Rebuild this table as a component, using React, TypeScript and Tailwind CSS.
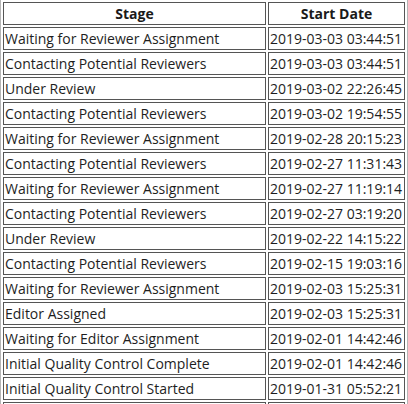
import React from "react";

const rows: [string, string][] = [
  ["Waiting for Reviewer Assignment", "2019-03-03 03:44:51"],
  ["Contacting Potential Reviewers", "2019-03-03 03:44:51"],
  ["Under Review", "2019-03-02 22:26:45"],
  ["Contacting Potential Reviewers", "2019-03-02 19:54:55"],
  ["Waiting for Reviewer Assignment", "2019-02-28 20:15:23"],
  ["Contacting Potential Reviewers", "2019-02-27 11:31:43"],
  ["Waiting for Reviewer Assignment", "2019-02-27 11:19:14"],
  ["Contacting Potential Reviewers", "2019-02-27 03:19:20"],
  ["Under Review", "2019-02-22 14:15:22"],
  ["Contacting Potential Reviewers", "2019-02-15 19:03:16"],
  ["Waiting for Reviewer Assignment", "2019-02-03 15:25:31"],
  ["Editor Assigned", "2019-02-03 15:25:31"],
  ["Waiting for Editor Assignment", "2019-02-01 14:42:46"],
  ["Initial Quality Control Complete", "2019-02-01 14:42:46"],
  ["Initial Quality Control Started", "2019-01-31 05:52:21"],
];

const App = () => {
  return (
    <div className="w-[408px] h-[404px] overflow-hidden bg-white">
      <table
        className="w-[408px] border-separate border-spacing-[2px] border border-t-0 border-[#b5b5b5] text-[14px] text-[#1e1e1e] leading-[19px]"
        style={{ fontFamily: '"Open Sans", sans-serif' }}
      >
        <thead>
          <tr>
            <th className="w-[263px] h-[23px] border border-[#555] px-[1px] font-bold text-center text-[#1a1a1a]">
              Stage
            </th>
            <th className="h-[23px] border border-[#555] px-[1px] font-bold text-center text-[#1a1a1a]">
              Start Date
            </th>
          </tr>
        </thead>
        <tbody>
          {rows.map(([stage, date], i) => (
            <tr key={i}>
              <td className="h-[23px] border border-[#555] px-[1px] text-left">{stage}</td>
              <td className="h-[23px] border border-[#555] px-[1px] text-left whitespace-nowrap">{date}</td>
            </tr>
          ))}
          {/* next row is cut off by the window edge */}
          <tr>
            <td className="h-[23px] border border-[#555] px-[1px]"></td>
            <td className="h-[23px] border border-[#555] px-[1px]"></td>
          </tr>
        </tbody>
      </table>
    </div>
  );
};

export default App;
